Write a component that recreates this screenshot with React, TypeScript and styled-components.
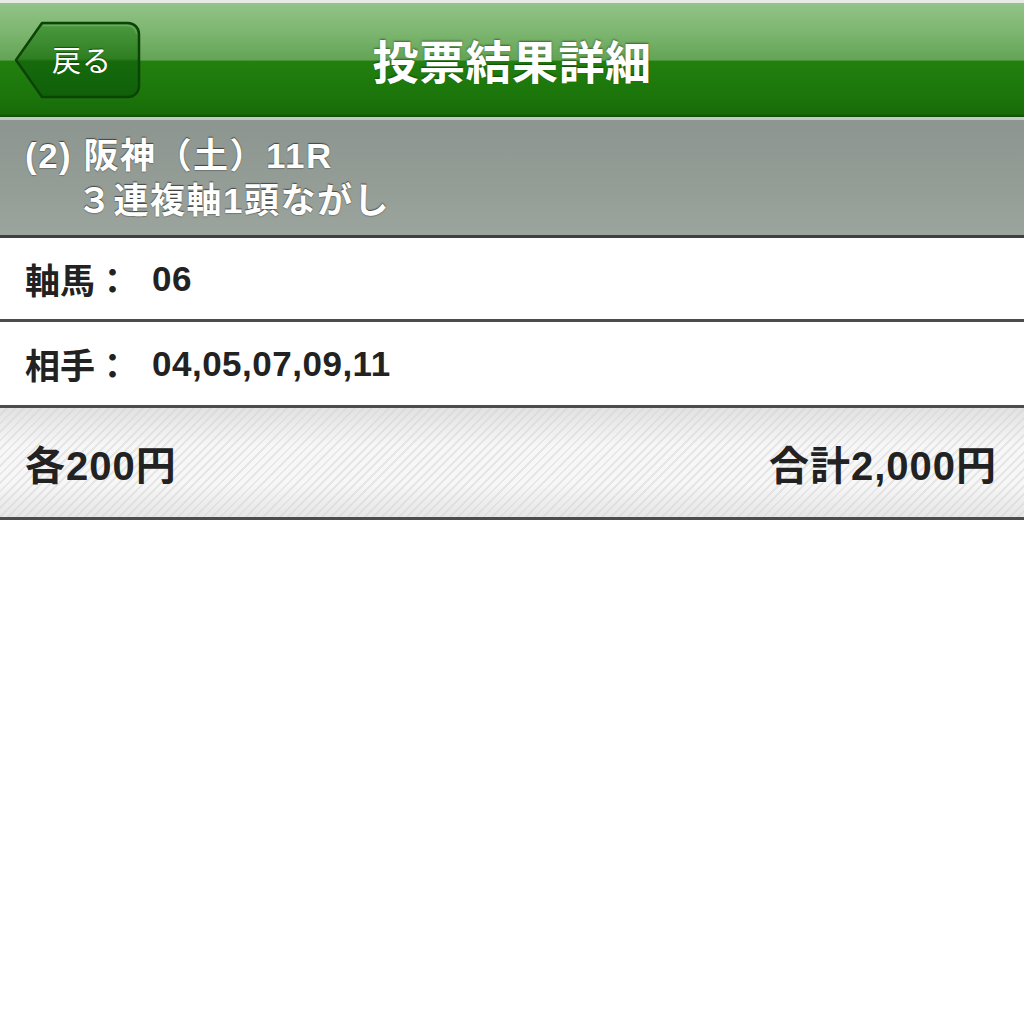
import React from "react";
import styled, { createGlobalStyle } from "styled-components";

const GlobalStyle = createGlobalStyle`
  html, body {
    margin: 0;
    padding: 0;
    background: #ffffff;
  }
  body {
    font-family: "Liberation Sans", "Noto Sans CJK JP", sans-serif;
  }
`;

const Page = styled.div`
  display: flex;
  flex-direction: column;
  width: 1024px;
  min-height: 1024px;
  background: #ffffff;
  font-family: "Liberation Sans", "Noto Sans CJK JP", sans-serif;
`;

const NavBar = styled.header`
  display: grid;
  grid-template-columns: 1fr auto 1fr;
  align-items: center;
  height: 114px;
  border-top: 3px solid #e6e9e6;
  border-bottom: 3px solid #c6cbc6;
  background: linear-gradient(
    to bottom,
    #92c387 0%,
    #7db670 25%,
    #63a455 50%,
    #22800f 51%,
    #1c760b 80%,
    #186c08 97%,
    #0f4d05 100%
  );
`;

const BackButton = styled.button`
  position: relative;
  justify-self: start;
  margin-left: 13px;
  width: 128px;
  height: 78px;
  padding: 0 0 0 10px;
  border: none;
  background: transparent;
  display: flex;
  align-items: center;
  justify-content: center;
  color: #ffffff;
  font-family: "Noto Sans CJK JP", sans-serif;
  font-weight: 400;
  font-size: 29px;
  letter-spacing: 1px;
  text-shadow: 0 -1px 1px rgba(0, 0, 0, 0.45);
  cursor: pointer;
`;

const ButtonShape = styled.svg`
  position: absolute;
  inset: 0;
  width: 100%;
  height: 100%;
`;

const ButtonLabel = styled.span`
  position: relative;
  margin-top: -2px;
`;

const Title = styled.h1`
  margin: -2px 0 0 0;
  color: #ffffff;
  font-family: "Noto Sans CJK JP", sans-serif;
  font-weight: 700;
  font-size: 46px;
  line-height: 1;
  letter-spacing: 0.5px;
  text-shadow: 0 -1px 2px rgba(0, 0, 0, 0.45);
`;

const RaceHeader = styled.section`
  padding: 13px 24px 12px 25px;
  background: linear-gradient(to bottom, #8c958f 0%, #959d97 60%, #9ca49e 100%);
  border-bottom: 3px solid #3f403f;
  color: #ffffff;
  font-weight: 700;
  font-size: 35px;
  line-height: 45px;
  letter-spacing: 1.5px;
  text-shadow: 0 -1px 1px rgba(0, 0, 0, 0.55), 0 1px 1px rgba(0, 0, 0, 0.25);
`;

const RaceLine = styled.div<{ $indent?: boolean }>`
  padding-left: ${(p) => (p.$indent ? "52px" : "0")};
  white-space: nowrap;
`;

const InfoRow = styled.div<{ $h: number }>`
  display: flex;
  align-items: center;
  height: ${(p) => p.$h}px;
  padding: 0 25px;
  background: #ffffff;
  border-bottom: 3px solid #4c4c4c;
  color: #222222;
  font-weight: 700;
  font-size: 35px;
  white-space: nowrap;
`;

const RowLabel = styled.span`
  display: inline-block;
  width: 127px;
`;

const RowValue = styled.span`
  letter-spacing: 0.5px;
`;

const Footer = styled.div`
  display: flex;
  align-items: center;
  justify-content: space-between;
  height: 109px;
  padding: 0 27px 0 25px;
  border-bottom: 3px solid #4c4c4c;
  background:
    repeating-linear-gradient(
      135deg,
      rgba(255, 255, 255, 0) 0px,
      rgba(255, 255, 255, 0) 4px,
      rgba(210, 210, 210, 0.45) 4px,
      rgba(210, 210, 210, 0.45) 6px
    ),
    linear-gradient(to bottom, #e2e2e2 0%, #f7f7f7 35%, #f7f7f7 70%, #e6e6e6 100%);
  color: #222222;
  font-weight: 700;
  font-size: 40px;
`;

const Amount = styled.span`
  white-space: nowrap;
  letter-spacing: 1px;
`;

export default function App() {
  return (
    <Page>
      <GlobalStyle />
      <NavBar>
        <BackButton type="button">
          <ButtonShape viewBox="0 0 128 78" preserveAspectRatio="none">
            <defs>
              <linearGradient id="btnFill" x1="0" y1="0" x2="0" y2="1">
                <stop offset="0%" stopColor="#4c9a40" />
                <stop offset="48%" stopColor="#2f7f22" />
                <stop offset="52%" stopColor="#166a0c" />
                <stop offset="100%" stopColor="#10600a" />
              </linearGradient>
            </defs>
            <path
              d="M29,2 H115 A11,11 0 0 1 126,13 V65 A11,11 0 0 1 115,76 H29 L3,39 Z"
              fill="url(#btnFill)"
              stroke="#0c4406"
              strokeWidth="2.5"
              strokeLinejoin="round"
            />
            <path
              d="M30,4.5 H114 A9,9 0 0 1 123.5,13"
              fill="none"
              stroke="rgba(255,255,255,0.18)"
              strokeWidth="1.5"
            />
          </ButtonShape>
          <ButtonLabel>戻る</ButtonLabel>
        </BackButton>
        <Title>投票結果詳細</Title>
        <div />
      </NavBar>
      <RaceHeader>
        <RaceLine>(2) 阪神（土）11R</RaceLine>
        <RaceLine $indent>３連複軸1頭ながし</RaceLine>
      </RaceHeader>
      <InfoRow $h={81}>
        <RowLabel>軸馬：</RowLabel>
        <RowValue>06</RowValue>
      </InfoRow>
      <InfoRow $h={83}>
        <RowLabel>相手：</RowLabel>
        <RowValue>04,05,07,09,11</RowValue>
      </InfoRow>
      <Footer>
        <Amount>各200円</Amount>
        <Amount>合計2,000円</Amount>
      </Footer>
    </Page>
  );
}
